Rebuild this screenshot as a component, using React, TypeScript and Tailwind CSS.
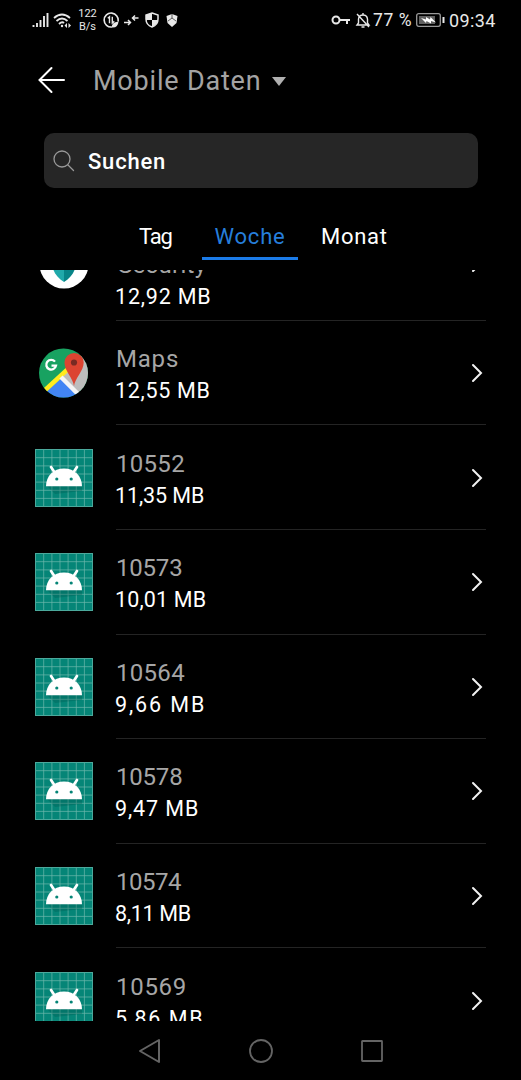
import React from 'react';

interface AppUsage {
  name: string;
  usage: string;
  icon: 'security' | 'maps' | 'android';
  nameClass: string;
  usageClass: string;
}

const apps: AppUsage[] = [
  { name: 'Security', usage: '12,92 MB', icon: 'security', nameClass: 'tracking-[0.300px] ml-[2px]', usageClass: 'tracking-[0.800px]' },
  { name: 'Maps', usage: '12,55 MB', icon: 'maps', nameClass: 'tracking-[0.800px]', usageClass: 'tracking-[0.700px]' },
  { name: '10552', usage: '11,35 MB', icon: 'android', nameClass: 'tracking-[0.300px]', usageClass: 'tracking-[-0.100px]' },
  { name: '10573', usage: '10,01 MB', icon: 'android', nameClass: 'tracking-[-0.200px]', usageClass: 'tracking-[0.150px]' },
  { name: '10564', usage: '9,66 MB', icon: 'android', nameClass: 'tracking-[0.300px]', usageClass: 'tracking-[1.900px]' },
  { name: '10578', usage: '9,47 MB', icon: 'android', nameClass: 'tracking-[-0.200px]', usageClass: 'tracking-[0.900px]' },
  { name: '10574', usage: '8,11 MB', icon: 'android', nameClass: 'tracking-[-0.500px]', usageClass: 'tracking-[-0.300px]' },
  { name: '10569', usage: '5,86 MB', icon: 'android', nameClass: 'tracking-[0.700px]', usageClass: 'tracking-[1.600px]' },
];

const gridLines = [8.7, 16.9, 25, 33.1, 41.3, 49.4];

function AndroidIcon() {
  return (
    <svg width="58" height="58" viewBox="0 0 58 58">
      <rect width="58" height="58" fill="#058577" />
      <g stroke="#6fb8ac" strokeWidth="0.7">
        {gridLines.map((p) => (
          <path key={p} d={`M${p} 0V58M0 ${p}H58`} />
        ))}
      </g>
      <rect x="0.5" y="0.5" width="57" height="57" fill="none" stroke="#4ba99c" />
      <path d="M12 37 20 45 47 42 47 37Z" fill="#00574b" opacity="0.3" />
      <path d="m16 18 4 6M42 18l-4 6" stroke="#fff" strokeWidth="2.7" strokeLinecap="round" />
      <path d="M11 37.200C11 27 18.500 19.500 29 19.500S47 27 47 37.200Z" fill="#fff" />
      <circle cx="21.800" cy="30" r="1.600" fill="#058577" />
      <circle cx="36.200" cy="30" r="1.600" fill="#058577" />
    </svg>
  );
}

function MapsIcon() {
  return (
    <svg width="50" height="50" viewBox="0 0 50 50">
      <defs>
        <clipPath id="maps-disc">
          <circle cx="24.500" cy="25" r="24.500" />
        </clipPath>
      </defs>
      <g clipPath="url(#maps-disc)">
        <rect width="50" height="50" fill="#18a261" />
        <path d="M50 0 22 28 44 50H50Z" fill="#bdbdbd" />
        <path d="M0 50 22 30 44 50Z" fill="#4285f4" />
        <path d="M4 44 29 21" stroke="#ffeb1f" strokeWidth="4.500" />
        <path d="m22 29 20 20" stroke="#f5f5f5" strokeWidth="4.500" />
      </g>
      <path d="M35 38C34 30 25.500 23 25.500 14.500a9.600 9.600 0 0 1 19.200 0C44.700 23 36 30 35 38Z" fill="#dc4431" />
      <circle cx="35" cy="14.500" r="3.100" fill="#782a23" />
      <path d="M16 13.600A4.900 4.900 0 1 0 17 17.600H12.500" fill="none" stroke="#fff" strokeWidth="2.300" />
    </svg>
  );
}

function SecurityIcon() {
  return (
    <svg width="50" height="50" viewBox="0 0 50 50" className="mb-[9px]">
      <circle cx="25" cy="25" r="24.500" fill="#fff" />
      <path d="M13 14 25 9V43C17 38 13 31 13 23Z" fill="#20a9aa" />
      <path d="M25 9 37 14V23C37 31 33 38 25 43Z" fill="#078487" />
    </svg>
  );
}

function AppIcon({ icon }: { icon: AppUsage['icon'] }) {
  if (icon === 'security') return <SecurityIcon />;
  if (icon === 'maps') return <MapsIcon />;
  return <AndroidIcon />;
}

function StatusBar() {
  return (
    <header className="flex h-10 shrink-0 items-center justify-between pr-[25px] pl-8 text-[#e8e8e8]">
      <div className="flex items-center">
        <svg width="17" height="16" viewBox="0 0 17 16" stroke="currentColor" strokeWidth="1.900" className="mr-1">
          <path d="M1.500 15v-2M5 15v-4M8.500 15V8M12 15V4M15.500 15V1" />
        </svg>
        <svg width="19" height="17" viewBox="0 0 19 17" fill="none" stroke="currentColor" strokeWidth="1.800" className="mr-1.5">
          <path d="M1 6Q9 -1 17 6M3.500 9Q9 4 14.500 9M6 12Q9 9 11 11" />
          <circle cx="9" cy="14" r="1.200" fill="currentColor" stroke="none" />
          <path d="M14 11v5l-2.500-2.500ZM15.500 11v5l2.500-2.500Z" fill="currentColor" stroke="none" />
        </svg>
        <div className="mr-[6px] flex w-[19px] flex-col items-center text-[11px] leading-[13px]">
          <span>122</span>
          <span>B/s</span>
        </div>
        <svg width="17" height="17" viewBox="0 0 17 17" fill="none" stroke="currentColor" className="mr-1">
          <path d="M15 9.500A7 7 0 1 0 9 15" strokeWidth="1.600" />
          <path d="m4.800 6.200 1.700-1.400v6.400M9.300 4.800v6.200l2-1.600" strokeWidth="1.400" />
          <path d="M9 15.500Q8 10.500 15.500 9.500q-.5 6.500-6.500 6" fill="currentColor" stroke="none" />
        </svg>
        <svg width="15" height="12" viewBox="0 0 15 12" fill="none" stroke="currentColor" strokeWidth="1.500" className="mr-1.5">
          <path d="M0 8.500h6M4 6l2.500 2.500L4 11M14.500 4H9M11 1.500 8.500 4 11 6.500" />
        </svg>
        <svg width="14" height="16" viewBox="0 0 14 16" className="mr-[7px]">
          <path d="M7 1 13 3V7Q13 13 7 15 1 13 1 7V3Z" fill="none" stroke="currentColor" strokeWidth="1.500" />
          <path d="M7 1V8H1V3ZM7 8H13Q12 13 7 15Z" fill="currentColor" />
        </svg>
        <svg width="12" height="15" viewBox="0 0 12 15">
          <path d="M6 1 11.500 3 10.500 10 6 14 1.500 10 .5 3Z" fill="currentColor" />
          <path d="m2 8 4-3 4 3M6 1v4" fill="none" stroke="#000" strokeWidth="0.600" />
        </svg>
      </div>
      <div className="flex items-center">
        <svg width="20" height="12" viewBox="0 0 20 12" fill="none" stroke="currentColor" strokeWidth="2" className="mr-1">
          <circle cx="5" cy="6" r="3.500" />
          <path d="M8.500 6H19M16 6v4" />
        </svg>
        <svg width="16" height="17" viewBox="0 0 16 17" fill="none" stroke="currentColor" strokeWidth="1.400" className="mr-0.5">
          <path d="M2 13H14L12.500 11V7Q12 3 8 3 4 3 3.500 7v4ZM6.500 15h3M8 1v2M2 2l12 13" />
        </svg>
        <span className="w-[43px] whitespace-nowrap text-[17.500px] tracking-[0.600px]">77 %</span>
        <svg width="29" height="14" viewBox="0 0 29 14">
          <rect x="0.700" y="0.700" width="23.600" height="12.600" rx="2" fill="none" stroke="#999" strokeWidth="1.300" />
          <rect x="3" y="3" width="16" height="8" fill="#606060" />
          <path d="m5 5 5 1.500V4l4 2.500L14.500 4 20 9.500 15 8v2.500L10.500 8 10 10Z" fill="#fff" />
          <path d="M27.500 4v6" stroke="currentColor" strokeWidth="2" />
        </svg>
        <span className="ml-1 w-[47px] whitespace-nowrap text-[18px] tracking-[0.400px]">09:34</span>
      </div>
    </header>
  );
}

function AppRow({ app }: { app: AppUsage }) {
  const isSecurity = app.icon === 'security';
  return (
    <li className="flex h-[104.640px] shrink-0 pr-[35px] pl-[35px]">
      <div className="flex w-[58px] items-center justify-center">
        <AppIcon icon={app.icon} />
      </div>
      <div className="ml-[23px] flex flex-1 items-center justify-between border-b border-[#242424]">
        <div className={`flex flex-col whitespace-nowrap ${isSecurity ? 'pt-[26px]' : 'pt-[5px]'}`}>
          <span className={`text-[24px] leading-8 text-[#a6a6a6] ${app.nameClass}`}>{app.name}</span>
          <span className={`-ml-px text-[21.500px] leading-8 text-white ${app.usageClass}`}>{app.usage}</span>
        </div>
        <svg
          width="12"
          height="20"
          viewBox="0 0 12 20"
          fill="none"
          stroke="#f2f2f2"
          strokeWidth="2"
          strokeLinecap="round"
          className={`mr-[3px] ${isSecurity ? 'mb-[9px]' : 'mt-px'}`}
        >
          <path d="m2 2 8 8-8 8" />
        </svg>
      </div>
    </li>
  );
}

export default function App() {
  return (
    <div className="flex h-[1080px] w-[521px] flex-col overflow-hidden bg-black font-[Roboto,sans-serif] text-white">
      <StatusBar />

      <div className="flex h-[80px] shrink-0 items-center pl-[38px]">
        <svg width="28" height="28" viewBox="0 0 28 28" fill="none" stroke="#fff" strokeWidth="2" strokeLinecap="round">
          <path d="M26 14H2M13.500 2 1.500 14l12 12" />
        </svg>
        <h1 className="ml-[27px] w-[179px] pt-[2px] whitespace-nowrap text-[27px] tracking-[0.800px] text-[#a3a3a3]">Mobile Daten</h1>
        <svg width="14" height="9" viewBox="0 0 14 9" className="mt-[2px]">
          <path d="M0 0H14L7 9Z" fill="#b0b0b0" />
        </svg>
      </div>

      <div className="mx-[44px] mt-[13px] flex h-[55px] w-[434px] shrink-0 items-center rounded-[10px] bg-[#262626] pl-[9px]">
        <svg width="22" height="22" viewBox="0 0 22 22" fill="none" stroke="#999" strokeWidth="1.300" strokeLinecap="round">
          <circle cx="9" cy="9" r="8" />
          <path d="m15 15 5.500 5.500" />
        </svg>
        <span className="ml-[13px] pt-px text-[22px] font-medium tracking-[0.800px]">Suchen</span>
      </div>

      <nav className="mt-[26px] flex h-[46px] shrink-0 pl-[139px] text-[22px]">
        <button className="h-[46px] w-[34px] pb-[2px] text-left tracking-[-1.200px]">Tag</button>
        <button className="ml-[29px] h-[46px] w-[96px] border-b-[3px] border-[#1b7be8] pt-px text-[#267edb] tracking-[0.800px]">Woche</button>
        <button className="ml-[23px] h-[46px] pb-[2px] text-left tracking-[0.700px]">Monat</button>
      </nav>

      <main className="mt-[10px] flex h-[751px] shrink-0 flex-col overflow-hidden">
        <ul className="-mt-[54px] flex flex-col">
          {apps.map((app) => (
            <AppRow key={app.name} app={app} />
          ))}
        </ul>
      </main>

      <footer className="flex flex-1 items-center justify-center gap-[87px]">
        <svg width="24" height="26" viewBox="0 0 24 26" fill="none" stroke="#646464" strokeWidth="2" strokeLinejoin="round">
          <path d="M21 2V24L2 13Z" />
        </svg>
        <svg width="24" height="24" viewBox="0 0 24 24" fill="none" stroke="#646464" strokeWidth="1.800">
          <circle cx="12" cy="12" r="11" />
        </svg>
        <svg width="24" height="24" viewBox="0 0 24 24" fill="none" stroke="#646464" strokeWidth="1.800">
          <rect x="2" y="2" width="20" height="20" rx="0.500" />
        </svg>
      </footer>
    </div>
  );
}
